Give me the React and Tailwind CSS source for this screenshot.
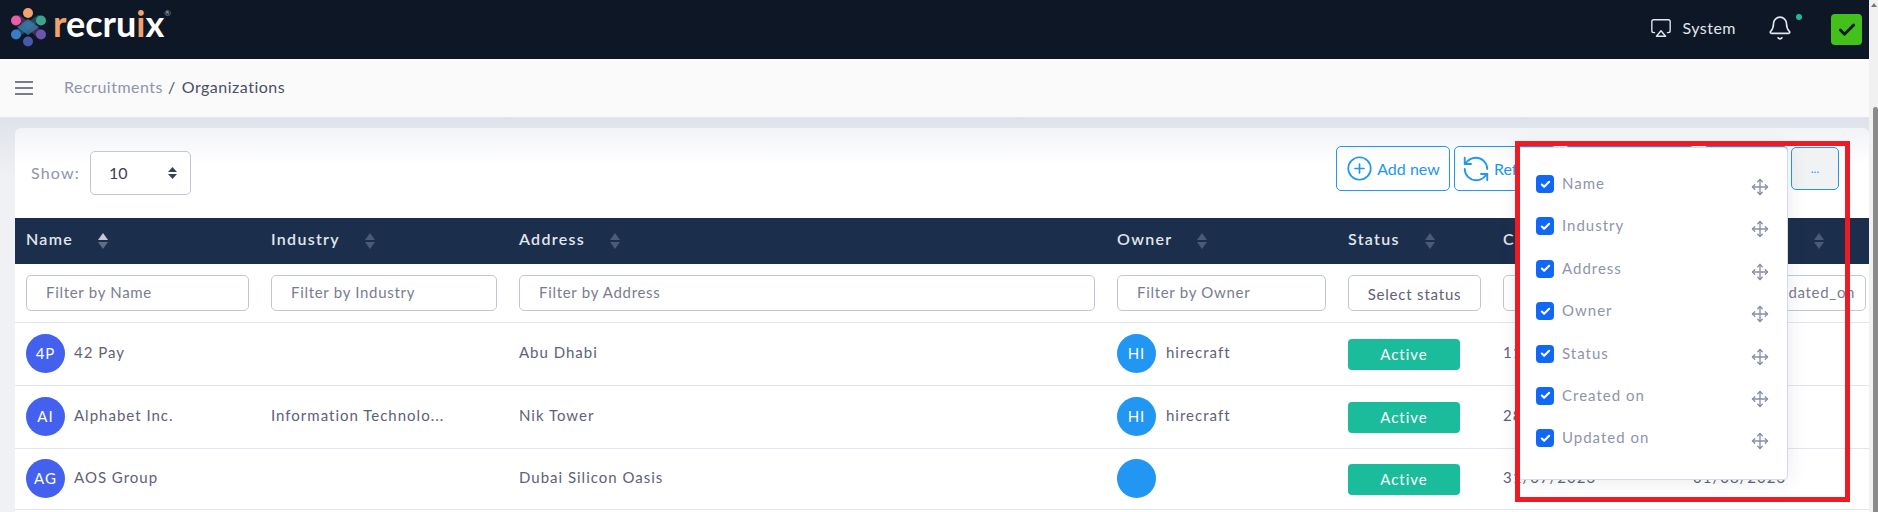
import React from 'react';
import { Airplay, Bell, Check, CirclePlus, Move, RefreshCcw } from 'lucide-react';

const columns = ['Name', 'Industry', 'Address', 'Owner', 'Status', 'Created on', 'Updated on'];

const rows = [
  { initials: '4P', name: '42 Pay', industry: '', address: 'Abu Dhabi', owner: 'HI', ownerName: 'hirecraft', created: '11/07/2023', updated: '01/08/2023', height: 'h-[63px]' },
  { initials: 'AI', name: 'Alphabet Inc.', industry: 'Information Technolo...', address: 'Nik Tower', owner: 'HI', ownerName: 'hirecraft', created: '28/07/2023', updated: '01/08/2023', height: 'h-[63px]' },
  { initials: 'AG', name: 'AOS Group', industry: '', address: 'Dubai Silicon Oasis', owner: '', ownerName: '', created: '31/07/2023', updated: '01/08/2023', height: 'h-[61px]' },
];

const Logo = () => (
  <div className="flex items-center">
    <svg width="50" height="59" viewBox="0 0 50 59">
      <polygon points="14,17 19,15 44,32 38,38" fill="#8a4a8f" opacity="0.45" />
      <polygon points="38,15 43,18 18,38 13,32" fill="#2f7f8f" opacity="0.5" />
      <polygon points="28,19 39,27 28,35 17,27" fill="#3b78a8" opacity="0.8" />
      <circle cx="28" cy="13" r="5" fill="#f4a26d" />
      <circle cx="16" cy="20.5" r="5" fill="#e95fa6" />
      <circle cx="41" cy="20.5" r="5" fill="#3aa58c" />
      <circle cx="16" cy="34.5" r="5" fill="#3a7cc5" />
      <circle cx="41" cy="34.5" r="5" fill="#6a57ad" />
      <circle cx="28" cy="41.5" r="5" fill="#4a57ab" />
    </svg>
    <span className="ml-[3px] font-['Lato',sans-serif] text-[36px] leading-none font-bold text-white mb-[13px]">
      <span className="text-[#f4a26d]">r</span>ecru<span className="text-[#f4a26d]">i</span>x
    </span>
    <span className="text-[8px] text-[#b8bcc8] mb-[34px]">®</span>
  </div>
);

const SortIcon = ({ active }) => (
  <svg width="10" height="16" viewBox="0 0 10 16" className="ml-[25px] shrink-0">
    <polygon points="5,0 10,7 0,7" fill={active ? '#c3cad6' : '#4b5a78'} />
    <polygon points="0,9 10,9 5,16" fill={active ? '#5f6c84' : '#4b5a78'} />
  </svg>
);

const Avatar = ({ text, color }) => (
  <div className={`w-[39px] h-[39px] rounded-full flex items-center justify-center text-white text-[15px] shrink-0 ${color}`}>
    {text}
  </div>
);

const ColumnPicker = () => (
  <div className="absolute top-[19px] right-[81px] w-[270px] h-[333px] bg-white rounded-[4px] border border-[#d8dbe4] shadow-[0_0_20px_rgba(60,70,110,0.12)] pt-[27px] pl-[17px] pr-[18px] z-10">
    {columns.map((col) => (
      <div key={col} className="flex items-start h-[42.4px]">
        <div className="w-[18px] h-[18px] rounded-[4px] bg-[#1168f6] flex items-center justify-center shrink-0">
          <Check size={11} strokeWidth={4.5} className="text-white" />
        </div>
        <span className="ml-[8px] -mt-[2px] text-[#8f94ad] text-[15px] leading-[20px] tracking-[1px]">{col}</span>
        <Move size={18} strokeWidth={1.8} className="ml-auto mt-[3px] text-[#888ea8]" />
      </div>
    ))}
  </div>
);

const filterInput = "w-full h-[36px] rounded-[5px] border border-[#bfc9d4] pb-[2px] text-[15px] tracking-[0.7px] placeholder:text-[#787d90] outline-none";

const App = () => (
  <div className="flex w-full h-[512px] overflow-hidden font-['Lato',sans-serif] text-[15px] text-[#5e6278]">
    <div className="flex-1 min-w-0 flex flex-col">
      <header className="h-[59px] shrink-0 bg-[#0e1726] flex items-center justify-between">
        <Logo />
        <div className="flex items-center text-[#e0e6ed] pr-[7px] mb-[4px]">
          <Airplay size={22} strokeWidth={1.5} />
          <span className="ml-[10px] text-[16px] tracking-[0.5px]">System</span>
          <div className="relative ml-[31px]">
            <Bell size={26} strokeWidth={1.5} />
            <span className="absolute -top-[1px] -right-[9px] w-[6px] h-[6px] rounded-full bg-[#1abc9c]" />
          </div>
          <div className="ml-[38px] mt-[4px] w-[31px] h-[31px] rounded-[4px] bg-[#44c01a] flex items-center justify-center">
            <Check size={20} strokeWidth={3.5} className="text-[#0e1726]" />
          </div>
        </div>
      </header>

      <div className="h-[59px] shrink-0 bg-[#fafafa] border-b border-[#e0e6ed] flex items-center pl-[15px]">
        <svg width="18" height="14" viewBox="0 0 18 14" className="text-[#515365]">
          <path d="M0 1h18M0 7h18M0 13h18" stroke="currentColor" strokeWidth="1.6" />
        </svg>
        <div className="ml-[31px] mb-[3px] flex items-center text-[16px] tracking-[0.5px]">
          <span className="text-[#8f94ad]">Recruitments</span>
          <span className="ml-[5px] text-[#515365]">/</span>
          <span className="ml-[6px] text-[#4b4f66]">Organizations</span>
        </div>
      </div>

      <main className="flex-1 pt-[10px] pl-[15px] bg-[linear-gradient(#dfe2ea,#f0f1f4_60px)]">
        <div className="relative rounded-t-[6px] bg-[linear-gradient(#f2f3f7,#ffffff_36px)] h-full">
          <div className="h-[90px] flex justify-between pr-[30px]">
            <div className="flex items-center self-start mt-[23px] pl-[16px]">
              <span className="text-[#8f94ad] text-[16px] tracking-[1.2px]">Show:</span>
              <div className="ml-[10px] w-[101px] h-[44px] bg-white rounded-[5px] border border-[#bfc9d4] flex items-center justify-between pl-[18px] pr-[13px] text-[16px] text-[#3b3f5c]">
                10
                <svg width="9" height="12" viewBox="0 0 9 12">
                  <polygon points="4.5,0 9,5 0,5" fill="#3b3f5c" />
                  <polygon points="0,7 9,7 4.5,12" fill="#3b3f5c" />
                </svg>
              </div>
            </div>
            <div className="flex items-start mt-[18px]">
              <button className="w-[114px] h-[45px] flex items-center justify-center gap-[4px] rounded-[5px] border border-[#2196f3] text-[#2196f3] text-[16px]">
                <CirclePlus size={27} strokeWidth={1.5} />
                Add new
              </button>
              <button className="ml-[4px] w-[103px] h-[45px] flex items-center pl-[6px] gap-[3px] rounded-[5px] border border-[#2196f3] text-[#2196f3] text-[16px]">
                <RefreshCcw size={30} strokeWidth={1.5} />
                Refresh
              </button>
              <button className="ml-[7px] w-[131px] h-[45px] rounded-[5px] border border-[#2196f3]" />
              <button className="ml-[8px] w-[85px] h-[45px] rounded-[5px] bg-[#2196f3]" />
              <button className="ml-[3px] mt-[1px] w-[48px] h-[43px] rounded-[5px] border border-[#2196f3] bg-[#f1f2f3] text-[#2196f3] text-[12px]">...</button>
            </div>
          </div>

          <table className="w-full table-fixed border-collapse bg-white">
            <colgroup>
              <col className="w-[245px]" />
              <col className="w-[248px]" />
              <col className="w-[598px]" />
              <col className="w-[231px]" />
              <col className="w-[155px]" />
              <col className="w-[190px]" />
              <col className="w-[187px]" />
            </colgroup>
            <thead>
              <tr className="h-[46px] bg-[#1b2e4b] text-[#e0e6ed]">
                {columns.map((col, i) => (
                  <th key={col} className="pl-[11px] text-left text-[16px] font-semibold tracking-[1.3px]">
                    <div className="flex items-center">
                      <span className="mb-[4px]">{col}</span>
                      <SortIcon active={i === 0} />
                    </div>
                  </th>
                ))}
              </tr>
              <tr className="h-[58px] border-b border-[#e0e6ed]">
                {['Filter by Name', 'Filter by Industry', 'Filter by Address', 'Filter by Owner'].map((p) => (
                  <th key={p} className="px-[11px] font-normal">
                    <input readOnly placeholder={p} className={`${filterInput} pl-[19px]`} />
                  </th>
                ))}
                <th className="px-[11px] font-normal">
                  <div className="h-[36px] rounded-[5px] border border-[#bfc9d4] flex items-center justify-center pt-[2px] text-[15px] tracking-[0.8px] text-[#5e6278] whitespace-nowrap">Select status</div>
                </th>
                <th className="px-[11px] font-normal">
                  <input readOnly placeholder="Filter by created_on" className={`${filterInput} pl-[19px]`} />
                </th>
                <th className="pl-[11px] pr-[3px] font-normal">
                  <input readOnly placeholder="Filter by updated_on" className={`${filterInput} pl-[12px]`} />
                </th>
              </tr>
            </thead>
            <tbody>
              {rows.map((row) => (
                <tr key={row.name} className={`${row.height} border-b border-[#e0e6ed] tracking-[1px]`}>
                  <td className="pl-[11px]">
                    <div className="flex items-center gap-[9px]">
                      <Avatar text={row.initials} color="bg-[#4361ee]" />
                      <span className="mb-[2px]">{row.name}</span>
                    </div>
                  </td>
                  <td className="pl-[11px] pb-[2px] whitespace-nowrap">{row.industry}</td>
                  <td className="pl-[11px] pb-[2px]">{row.address}</td>
                  <td className="pl-[11px]">
                    <div className="flex items-center gap-[10px]">
                      <Avatar text={row.owner} color="bg-[#2196f3]" />
                      <span className="mb-[2px]">{row.ownerName}</span>
                    </div>
                  </td>
                  <td className="pl-[11px]">
                    <div className="w-[112px] h-[31px] mt-[1px] rounded-[4px] bg-[#1abc9c] text-white text-[15px] flex items-center justify-center">Active</div>
                  </td>
                  <td className="pl-[11px] pb-[2px]">{row.created}</td>
                  <td className="pl-[11px] pb-[2px]">{row.updated}</td>
                </tr>
              ))}
            </tbody>
          </table>

          <ColumnPicker />
          <div className="absolute top-[13px] right-[19px] w-[335px] h-[361px] border-[5px] border-[#ed1c24] z-20 pointer-events-none" />
        </div>
      </main>
    </div>

    <div className="w-[9px] shrink-0 bg-[#f1f1f1] relative">
      <div className="absolute top-[3px] right-[1px] w-0 h-0 border-x-[3px] border-x-transparent border-b-[4px] border-b-[#777]" />
      <div className="absolute top-[107px] bottom-0 right-0 w-[5px] bg-[#8a8a8a] rounded-t-[3px]" />
    </div>
  </div>
);

export default App;
